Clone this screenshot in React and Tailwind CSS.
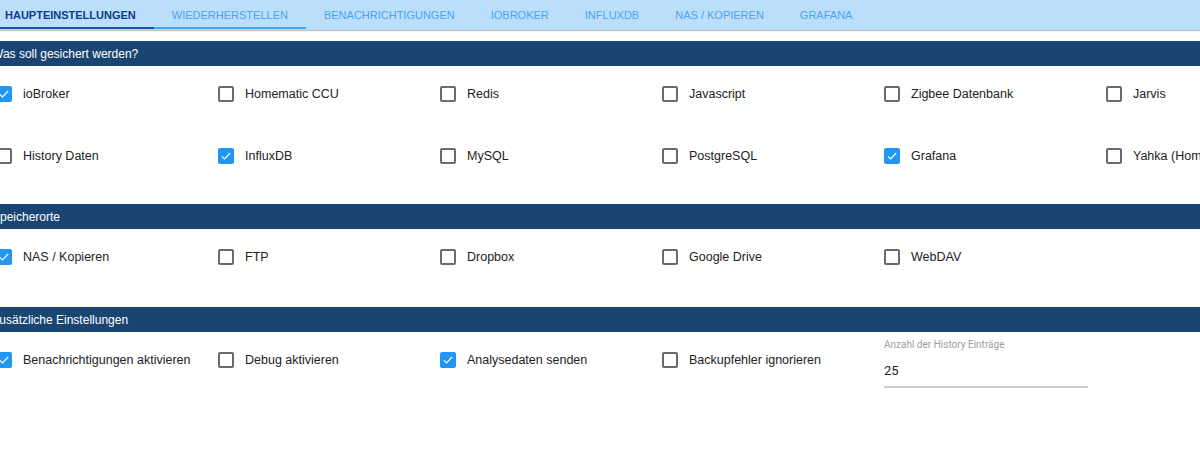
import React from 'react';

const tabs = [
  'HAUPTEINSTELLUNGEN',
  'WIEDERHERSTELLEN',
  'BENACHRICHTIGUNGEN',
  'IOBROKER',
  'INFLUXDB',
  'NAS / KOPIEREN',
  'GRAFANA',
];

const sections = [
  {
    title: 'Was soll gesichert werden?',
    rows: [
      [
        ['ioBroker', true],
        ['Homematic CCU', false],
        ['Redis', false],
        ['Javascript', false],
        ['Zigbee Datenbank', false],
        ['Jarvis', false],
      ],
      [
        ['History Daten', false],
        ['InfluxDB', true],
        ['MySQL', false],
        ['PostgreSQL', false],
        ['Grafana', true],
        ['Yahka (Homekit)', false],
      ],
    ],
  },
  {
    title: 'Speicherorte',
    rows: [
      [
        ['NAS / Kopieren', true],
        ['FTP', false],
        ['Dropbox', false],
        ['Google Drive', false],
        ['WebDAV', false],
      ],
    ],
  },
];

const Checkbox = ({ checked }) =>
  checked ? (
    <span className="flex h-4 w-4 shrink-0 items-center justify-center rounded-[2px] bg-[#2196f3]">
      <svg viewBox="0 0 16 16" className="h-3 w-3" fill="none">
        <path d="M2.5 8.5l3.5 3.5 7.5-8" stroke="#fff" strokeWidth="1.5" />
      </svg>
    </span>
  ) : (
    <span className="h-4 w-4 shrink-0 rounded-[2px] border-2 border-[#6b6b6b]" />
  );

const Item = ({ label, checked }) => (
  <div className="flex h-[18px] items-center gap-[11px] whitespace-nowrap">
    <Checkbox checked={checked} />
    <span className="text-[12.5px] text-[#222]">{label}</span>
  </div>
);

const SectionHeader = ({ title }) => (
  <div className="flex h-[25px] items-center bg-[#1a4573]">
    <span className="ml-[-8px] whitespace-nowrap text-[12px] text-white">{title}</span>
  </div>
);

const App = () => {
  return (
    <div
      className="h-[457px] w-[1200px] overflow-hidden bg-white"
      style={{ fontFamily: '"Liberation Sans", Arial, sans-serif' }}
    >
      <div className="relative flex h-[30px] items-center bg-[#bbdefb] shadow-[0_1px_1px_rgba(0,0,0,0.25)]">
        <div className="ml-[-13px] flex h-full">
          {tabs.map((t, i) => (
            <div
              key={t}
              className={`relative flex h-full items-center whitespace-nowrap px-[18px] text-[11px] ${
                i === 0 ? 'font-bold text-[#0d3c8c]' : 'text-[#4aa3ec]'
              }`}
            >
              {t}
              {i === 0 && (
                <span className="absolute bottom-[1px] left-0 right-0 h-[2px] bg-[#1a4fa8]" />
              )}
              {i === 1 && (
                <span className="absolute bottom-[1px] left-0 right-0 h-[2px] bg-[#4aa3ec]" />
              )}
            </div>
          ))}
        </div>
      </div>

      <div className="h-[11px]" />

      {sections.map((s) => (
        <div key={s.title}>
          <SectionHeader title={s.title} />
          <div className="flex flex-col gap-[44px] pb-[39px] pt-[19px]">
            {s.rows.map((row, r) => (
              <div key={r} className="ml-[-4px] grid grid-cols-[repeat(6,222px)]">
                {row.map(([label, checked]) => (
                  <Item key={label} label={label} checked={checked} />
                ))}
              </div>
            ))}
          </div>
        </div>
      ))}

      <div className="mt-[2px]">
        <SectionHeader title="Zusätzliche Einstellungen" />
        <div className="ml-[-4px] grid grid-cols-[repeat(6,222px)] pt-[7px]">
          <div className="pt-[12px]">
            <Item label="Benachrichtigungen aktivieren" checked />
          </div>
          <div className="pt-[12px]">
            <Item label="Debug aktivieren" checked={false} />
          </div>
          <div className="pt-[12px]">
            <Item label="Analysedaten senden" checked />
          </div>
          <div className="pt-[12px]">
            <Item label="Backupfehler ignorieren" checked={false} />
          </div>
          <div className="w-[204px]" style={{ fontFamily: 'Roboto, sans-serif' }}>
            <div className="text-[10px] leading-[12px] text-[#9e9e9e]">
              Anzahl der History Einträge
            </div>
            <div className="mt-[12px] text-[13px] leading-[16px] text-[#222]">25</div>
            <div className="mt-[7px] h-[2px] bg-[#cfcfcf]" />
          </div>
        </div>
      </div>
    </div>
  );
};

export default App;
